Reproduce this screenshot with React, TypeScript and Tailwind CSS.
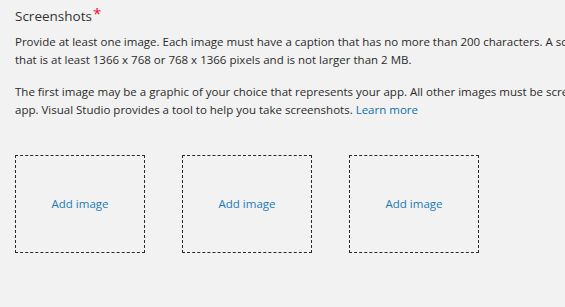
export default function App() {
  const font = { fontFamily: '"Open Sans", "Noto Sans", sans-serif' };
  return (
    <div className="w-[565px] h-[307px] overflow-hidden bg-[#f2f2f2]" style={font}>
      <div className="w-[800px] pl-[15px] pt-[6px] text-[#2b2b2b]">
        <div className="flex items-start text-[13.5px] leading-[20px] text-[#333]">
          <span>Screenshots</span>
          <span className="text-[#e81123] text-[15px] leading-[14px] ml-[1px]">*</span>
        </div>
        <p className="mt-[7px] text-[11.5px] leading-[17.5px] whitespace-nowrap">
          Provide at least one image. Each image must have a caption that has no more than 200 characters. A screenshot must be a .png file
          <br />
          that is at least 1366 x 768 or 768 x 1366 pixels and is not larger than 2 MB.
        </p>
        <p className="mt-[15px] text-[11.5px] leading-[17.5px] whitespace-nowrap">
          The first image may be a graphic of your choice that represents your app. All other images must be screenshots of your
          <br />
          app. Visual Studio provides a tool to help you take screenshots.{" "}
          <a className="text-[#0f6fb0]">Learn more</a>
        </p>
        <div className="mt-[37px] flex gap-[37px]">
          {[0, 1, 2].map((i) => (
            <div
              key={i}
              className="w-[130px] h-[98px] border border-dashed border-[#2b2b2b] flex items-center justify-center text-[11.5px] text-[#1a7ab5]"
            >
              Add image
            </div>
          ))}
        </div>
      </div>
    </div>
  );
}
